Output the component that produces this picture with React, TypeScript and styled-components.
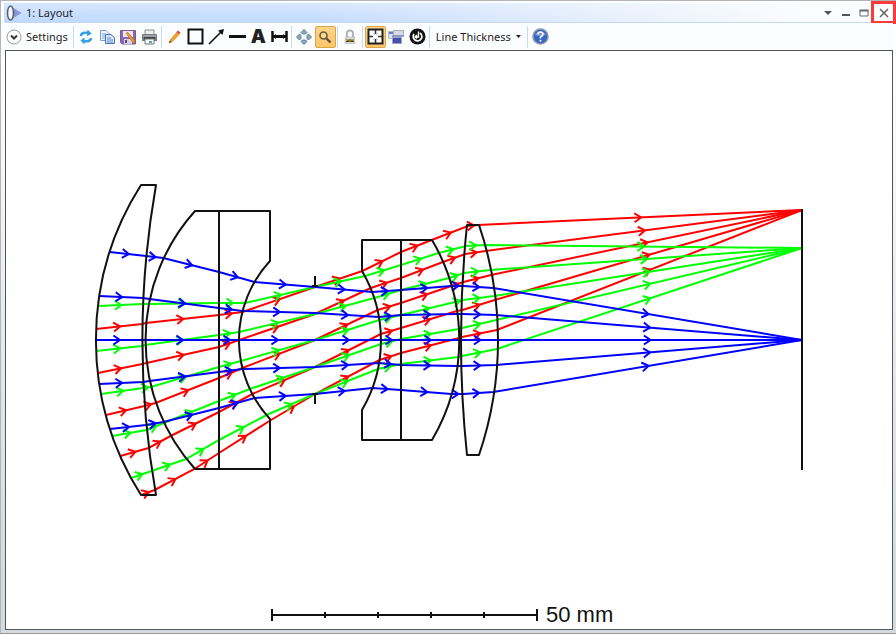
import React from "react";
import styled, { createGlobalStyle } from "styled-components";

const GlobalStyle = createGlobalStyle`
  * { box-sizing: border-box; }
  body { margin: 0; background: #fff; }
`;

const Window = styled.main`
  display: flex;
  flex-direction: column;
  height: 100vh;
  padding: 2px 3px 3px 4px;
  background: linear-gradient(#fdfeff 10%, #d5dade 90%);
  border-top: 1px solid #b4b4b8;
  border-left: 1px solid #b4b4b8;
  border-bottom: 1px solid #96999c;
  font-family: "Noto Sans", "Open Sans", sans-serif;
  font-size: 11px;
  color: #1e1e1e;
`;

const TitleBar = styled.header`
  display: flex;
  align-items: center;
  gap: 4px;
  height: 20px;
  margin: 0 -3px 0 -1px;
  padding-left: 2px;
  background: linear-gradient(to bottom, rgba(255, 255, 255, 0.35), rgba(255, 255, 255, 0)),
    linear-gradient(to right, #bfd9ff, #c3dbfd 35%, #e2edfc 65%, #fafcff 90%);
  border-bottom: 1px solid #c6d9ec;
`;

const Title = styled.h1`
  flex: 1;
  margin: 0;
  font-size: 11px;
  font-weight: 400;
  line-height: 18px;
`;

const WindowButtons = styled.div`
  display: flex;
  align-items: center;
`;

const WindowButton = styled.button<{ $marked?: boolean }>`
  display: grid;
  place-items: center;
  width: ${(p) => (p.$marked ? 25 : 18)}px;
  height: ${(p) => (p.$marked ? 23 : 18)}px;
  margin-left: ${(p) => (p.$marked ? "-2px" : "0")};
  padding: 0;
  background: ${(p) => (p.$marked ? "#fff" : "none")};
  border: ${(p) => (p.$marked ? "3px solid #fb3b3b" : "0")};
`;

const Toolbar = styled.div`
  display: flex;
  align-items: center;
  height: 27px;
  background: #fcfdff;
`;

const ToolButton = styled.button<{ $active?: boolean }>`
  display: flex;
  align-items: center;
  justify-content: center;
  width: 21px;
  height: 22px;
  padding: 0;
  background: ${(p) => (p.$active ? "linear-gradient(#fbd48c, #fdc566)" : "none")};
  border: ${(p) => (p.$active ? "1px solid #d9a648" : "0")};
  border-radius: 2px;
`;

const TextButton = styled.button`
  display: flex;
  align-items: center;
  gap: 4px;
  height: 22px;
  padding: 0 4px 0 1px;
  background: none;
  border: 0;
  color: inherit;
  font-family: inherit;
  font-size: 11px;
  white-space: nowrap;
`;

const MenuButton = styled(TextButton)`
  padding: 0 4px;
`;

const Separator = styled.span`
  width: 1px;
  height: 22px;
  margin: 0 2px 0 1px;
  background: #c9dcee;
`;

const Canvas = styled.section`
  flex: 1;
  min-height: 0;
  border: 1px solid #555;
  background: #fff;
`;

const Drawing = styled.svg`
  display: block;
  width: 100%;
  height: 100%;
`;

const ScaleLabel = styled.text`
  font-family: "Liberation Sans", Arial, sans-serif;
  font-size: 22px;
  fill: #111;
`;

const AXIS = 340;

type Surface = { x: number; radius: number };

// Positive radius: the centre of curvature lies to the right of the vertex.
const surfaces: Surface[] = [
  { x: 96, radius: 289 },
  { x: 142, radius: 896 },
  { x: 145, radius: 193 },
  { x: 219, radius: 0 },
  { x: 239, radius: 116 },
  { x: 315, radius: 0 },
  { x: 381, radius: -137 },
  { x: 401, radius: 0 },
  { x: 459, radius: -197 },
  { x: 462, radius: 1105 },
  { x: 497, radius: -357 },
  { x: 802, radius: 0 },
];

const RED = "#ff0000";
const GREEN = "#00ff00";
const BLUE = "#0000ff";

// Height of each ray at every surface, in drawing coordinates.
const rays: { color: string; y: number[] }[] = [
  { color: RED, y: [329, 324, 323, 315, 312, 287, 271, 252, 240, 226, 225, 210] },
  { color: RED, y: [373, 364, 363, 347, 340, 314, 288, 278, 262, 254, 251, 210] },
  { color: RED, y: [415, 406, 403, 378, 368, 340, 310, 303, 286, 282, 275, 210] },
  { color: RED, y: [456, 448, 436, 412, 394, 367, 334, 328, 311, 310, 300, 210] },
  { color: RED, y: [495, 490, 469, 453, 420, 394, 360, 353, 338, 337, 330, 210] },
  { color: GREEN, y: [306, 304, 304, 303, 303, 287, 276, 265, 253, 246, 245, 248] },
  { color: GREEN, y: [351, 346, 345, 335, 332, 314, 298, 290, 278, 273, 270, 248] },
  { color: GREEN, y: [394, 388, 387, 367, 361, 340, 320, 315, 302, 300, 296, 248] },
  { color: GREEN, y: [436, 430, 423, 401, 389, 367, 344, 339, 329, 328, 320, 248] },
  { color: GREEN, y: [478, 471, 459, 440, 415, 394, 369, 364, 357, 356, 349, 248] },
  { color: BLUE, y: [252, 256, 258, 272, 282, 287, 292, 290, 286, 286, 288, 340] },
  { color: BLUE, y: [296, 298, 299, 308, 311, 313, 317, 315, 314, 314, 315, 340] },
  { color: BLUE, y: [340, 340, 340, 340, 340, 340, 340, 340, 340, 340, 340, 340] },
  { color: BLUE, y: [384, 382, 381, 372, 369, 367, 363, 365, 366, 366, 365, 340] },
  { color: BLUE, y: [429, 425, 422, 408, 398, 394, 388, 390, 394, 394, 392, 340] },
];

function surfaceX({ x, radius }: Surface, y: number) {
  if (radius === 0) return x;
  const h = y - AXIS;
  const sag = Math.abs(radius) - Math.sqrt(radius * radius - h * h);
  return x + Math.sign(radius) * sag;
}

function Ray({ color, y }: { color: string; y: number[] }) {
  const points = y.map((v, i) => [surfaceX(surfaces[i], v), v]);
  const arrows: string[] = [];
  for (let i = 1; i < points.length; i++) {
    const [x0, y0] = points[i - 1];
    const [x1, y1] = points[i];
    if (Math.hypot(x1 - x0, y1 - y0) < 7) continue;
    const angle = Math.atan2(y1 - y0, x1 - x0);
    const mx = (x0 + x1) / 2 + Math.cos(angle);
    const my = (y0 + y1) / 2 + Math.sin(angle);
    const wing = (turn: number) =>
      `${mx - 8 * Math.cos(angle + turn)} ${my - 8 * Math.sin(angle + turn)}`;
    arrows.push(`M${wing(0.6)}L${mx} ${my}L${wing(-0.6)}`);
  }
  return (
    <g fill="none" stroke={color} strokeWidth="2">
      <polyline points={points.map((p) => p.join(",")).join(" ")} />
      <path d={arrows.join("")} />
    </g>
  );
}

function LensDrawing() {
  return (
    <Drawing viewBox="6 51 886 578" role="img" aria-label="Lens layout with ray paths">
      {rays.map((ray, i) => (
        <Ray key={i} color={ray.color} y={ray.y} />
      ))}
      <g fill="none" stroke="#111" strokeWidth="2" strokeLinejoin="round">
        <path d="M141 185H156A896 896 0 0 0 156 495H141A289 289 0 0 1 141 185Z" />
        <path d="M195 211H270V261A116 116 0 0 0 270 419V469H195A193 193 0 0 1 195 211ZM219 211V469" />
        <path d="M362 240H432A197 197 0 0 1 432 440H362V410A137 137 0 0 0 362 271ZM401 240V440" />
        <path d="M467 225H479A357 357 0 0 1 479 455H467A1105 1105 0 0 1 467 225Z" />
        <path d="M315 276V286M312 286H318M315 404V394M312 394H318" />
        <path d="M802 209V470" />
        <path d="M272 615H537M272 609V621M537 609V621M325 612V618M378 612V618M431 612V618M484 612V618" />
      </g>
      <ScaleLabel x="546" y="622">50 mm</ScaleLabel>
    </Drawing>
  );
}

const LensIcon = () => (
  <svg width="16" height="18" viewBox="0 0 16 18" fill="none">
    <path d="M5 3L15 9L5 15M5 9H14" stroke="#8a98dc" />
    <path d="M8 5L14 9L8 13Z" fill="#8793dc" />
    <ellipse cx="4.500" cy="9" rx="3" ry="7" fill="#f4f6fa" stroke="#5b6068" strokeWidth="1.500" />
  </svg>
);
const ChevronIcon = () => (
  <svg width="16" height="16" viewBox="0 0 16 16" fill="none">
    <circle cx="8" cy="8" r="7" fill="#fff" stroke="#9a9a9a" />
    <path d="M5 6.500L8 9.500L11 6.500" stroke="#333" strokeWidth="2" />
  </svg>
);
const RefreshIcon = () => (
  <svg width="14" height="16" viewBox="0 0 14 16" fill="none" stroke="#2f9fe0" strokeWidth="2.400">
    <path d="M2 7C2 4 6 3 9 4" /><path d="M12 9C12 12 8 13 5 12" />
    <path d="M8.500 .5L12.500 4.500L8 7.500ZM5.500 8.500L1.500 11.500L5.500 15.500Z" fill="#2f9fe0" stroke="none" />
  </svg>
);
const CopyIcon = () => (
  <svg width="17" height="16" viewBox="0 0 17 16">
    <path d="M1.500 1.500H7L10 4.500V11.500H1.500Z" fill="#eaf2fd" stroke="#7b9bd1" />
    <path d="M3 5H7M3 7H7M3 9H7" stroke="#7fa5dd" />
    <path d="M6.500 5.500H12L15.500 8.500V14.500H6.500Z" fill="#d9e7fb" stroke="#4a72b8" />
    <path d="M8 9H12M8 11H14M8 13H14" stroke="#5e8cd0" />
  </svg>
);
const SaveIcon = () => (
  <svg width="16" height="16" viewBox="0 0 16 16">
    <path d="M.5 1.500H15.500V15H2L.5 13.500Z" fill="#8a6ab4" stroke="#7858a4" />
    <path d="M3 2H13V8H3Z" fill="#e9e5f4" /><path d="M4 10H12V15H4Z" fill="#d7d3e3" />
    <path d="M5 11H7V14H5Z" fill="#5c4580" />
    <path d="M6 4L8 3.500L15 12L14 14L12.500 13Z" fill="#f49a25" stroke="#b86c17" strokeWidth=".6" />
  </svg>
);
const PrintIcon = () => (
  <svg width="17" height="16" viewBox="0 0 17 16">
    <path d="M4 1H13V6H4Z" fill="#eee" stroke="#909090" />
    <path d="M1 6Q1 5 2 5H15Q16 5 16 6V12H1Z" fill="#777c80" />
    <path d="M2 7H15" stroke="#c0c4c7" /><path d="M3 9H14" stroke="#444" strokeWidth="2" />
    <path d="M4 10H13V15H4Z" fill="#f7f8f8" stroke="#777" /><path d="M8 12H11V14H8Z" fill="#54a9cf" />
  </svg>
);
const PencilIcon = () => (
  <svg width="15" height="16" viewBox="0 0 15 16">
    <path d="M2 14L3.500 10.500L10 3L12.500 5L5.500 12.500Z" fill="#f4a12c" stroke="#d08423" strokeWidth=".6" />
    <path d="M9.500 3L11 1.500L13.500 3.500L12 5Z" fill="#d9464e" />
    <path d="M2 14L3 11.500L4.500 13Z" fill="#444" />
  </svg>
);
const BoxIcon = () => (
  <svg width="17" height="17" viewBox="0 0 17 17"><path d="M1.500 1.500H15.500V15.500H1.500Z" fill="none" stroke="#111" strokeWidth="2" /></svg>
);
const ArrowIcon = () => (
  <svg width="17" height="17" viewBox="0 0 17 17"><path d="M1 16L13 4" stroke="#111" strokeWidth="1.600" /><path d="M16 1L14.500 7L10 2.500Z" fill="#111" /></svg>
);
const LineIcon = () => (
  <svg width="17" height="17" viewBox="0 0 17 17"><path d="M0 8.500H17" stroke="#111" strokeWidth="3" /></svg>
);
const LetterIcon = styled.span`
  font-family: "Inter", "Liberation Sans", sans-serif;
  font-size: 19px;
  font-weight: 900;
  line-height: 20px;
  color: #222;
`;
const DimensionIcon = () => (
  <svg width="17" height="17" viewBox="0 0 17 17"><path d="M1.500 3V14M15.500 3V14" stroke="#111" strokeWidth="2.500" /><path d="M2 8.500H15" stroke="#111" strokeWidth="3" /><path d="M2 8.500L5 6V11ZM15 8.500L12 6V11Z" fill="#111" /></svg>
);
const PanIcon = () => (
  <svg width="16" height="16" viewBox="0 0 16 16" fill="#8aa9c2" stroke="#4c6b84" strokeWidth=".8">
    <path d="M8 .5L11 3.500L9.500 5H6.500L5 3.500ZM8 15.500L11 12.500L9.500 11H6.500L5 12.500ZM.5 8L3.500 5L5 6.500V9.500L3.500 11ZM15.500 8L12.500 5L11 6.500V9.500L12.500 11Z" />
  </svg>
);
const ZoomIcon = () => (
  <svg width="16" height="16" viewBox="0 0 16 16" fill="none">
    <circle cx="6.500" cy="6.500" r="3.500" fill="#f9d797" stroke="#6b5837" strokeWidth="1.600" />
    <path d="M9 9L13.500 13.500" stroke="#5d5040" strokeWidth="2.400" />
  </svg>
);
const LockIcon = () => (
  <svg width="14" height="16" viewBox="0 0 14 16">
    <path d="M4 9V4Q4 1.500 7 1.500Q10 1.500 10 4V9" fill="none" stroke="#b4b4b4" strokeWidth="2" />
    <path d="M2.500 8H11.500V14.500H2.500Z" fill="#ddd" stroke="#aaa" strokeWidth=".6" />
    <path d="M3 10.500H11V13H3Z" fill="#3a3520" /><path d="M3 12L5 10.500L7 12.500L9 10.500L11 12" fill="none" stroke="#e5c93a" />
  </svg>
);
const FitIcon = () => (
  <svg width="17" height="17" viewBox="0 0 17 17">
    <path d="M1.500 1.500H15.500V15.500H1.500Z" fill="#fff" stroke="#222" strokeWidth="2" />
    <path d="M8.500 2V6M8.500 11V15M2 8.500H6M11 8.500H15" stroke="#333" strokeWidth="1.600" />
    <path d="M6.500 5.500L7.500 6.500M10.500 5.500L9.500 6.500M6.500 11.500L7.500 10.500M10.500 11.500L9.500 10.500" stroke="#999" />
  </svg>
);
const WindowsIcon = () => (
  <svg width="17" height="16" viewBox="0 0 17 16">
    <path d="M.5 2.500H11.500V9.500H.5Z" fill="#e3e5ea" stroke="#b5b8c0" /><path d="M1 3H11V5H1Z" fill="#6f7fbd" />
    <path d="M5.500 1.500H15.500V6.500H5.500Z" fill="#d8dbe3" stroke="#a6abb8" /><path d="M4 6H16V8H4Z" fill="#8f9ac9" />
    <path d="M4.500 8.500H13.500V14.500H4.500Z" fill="#4450ad" stroke="#9ca3c5" />
  </svg>
);
const ResetIcon = () => (
  <svg width="17" height="17" viewBox="0 0 17 17" fill="none">
    <circle cx="8.500" cy="8.500" r="8" fill="#111" />
    <path d="M5 6A4.300 4.300 0 1 0 11 5" stroke="#fff" strokeWidth="1.800" /><path d="M9.500 3.500V9H6.500M8 7L6 9L8 10.500" stroke="#fff" strokeWidth="1.400" />
  </svg>
);
const HelpIcon = () => (
  <svg width="17" height="17" viewBox="0 0 17 17" fill="none">
    <circle cx="8.500" cy="8.500" r="7.500" fill="#3866bf" stroke="#8c98aa" strokeWidth="1.600" />
    <path d="M3 7A6 6 0 0 1 14 7Q8 9 3 7Z" fill="#7398dc" />
    <path d="M6 6.500Q6 4 8.500 4Q11 4 11 6.200Q11 7.500 8.500 9V10.500" stroke="#fff" strokeWidth="1.600" /><circle cx="8.500" cy="12.800" r="1" fill="#fff" />
  </svg>
);
const CaretIcon = () => (
  <svg width="7" height="5" viewBox="0 0 7 5"><path d="M1 1H6L3.500 4Z" fill="#222" /></svg>
);

const tools = {
  file: [["Refresh", RefreshIcon], ["Copy", CopyIcon], ["Save", SaveIcon], ["Print", PrintIcon]],
  draw: [["Pencil", PencilIcon], ["Rectangle", BoxIcon], ["Arrow", ArrowIcon], ["Line", LineIcon]],
} as const;

export default function App() {
  return (
    <>
      <GlobalStyle />
      <Window>
        <TitleBar>
          <LensIcon />
          <Title>1: Layout</Title>
          <WindowButtons>
            <WindowButton aria-label="Menu">
              <svg width="10" height="6"><path d="M1 1H9L5 5Z" fill="#555" /></svg>
            </WindowButton>
            <WindowButton aria-label="Minimize">
              <svg width="10" height="10"><path d="M1 7H9" stroke="#555" strokeWidth="2" /></svg>
            </WindowButton>
            <WindowButton aria-label="Maximize">
              <svg width="10" height="8"><path d="M1 1.500H9V7H1Z" fill="none" stroke="#666" /><path d="M.5 1.500H9.500" stroke="#666" strokeWidth="2" /></svg>
            </WindowButton>
            <WindowButton aria-label="Close" $marked>
              <svg width="10" height="10"><path d="M1 1L9 9M9 1L1 9" stroke="#666" strokeWidth="1.600" /></svg>
            </WindowButton>
          </WindowButtons>
        </TitleBar>
        <Toolbar role="toolbar" aria-label="Layout tools">
          <TextButton><ChevronIcon />Settings</TextButton>
          <Separator />
          {tools.file.map(([name, Icon]) => (
            <ToolButton key={name} aria-label={name}><Icon /></ToolButton>
          ))}
          <Separator />
          {tools.draw.map(([name, Icon]) => (
            <ToolButton key={name} aria-label={name}><Icon /></ToolButton>
          ))}
          <ToolButton aria-label="Text"><LetterIcon>A</LetterIcon></ToolButton>
          <ToolButton aria-label="Dimension"><DimensionIcon /></ToolButton>
          <Separator />
          <ToolButton aria-label="Pan"><PanIcon /></ToolButton>
          <ToolButton aria-label="Zoom" $active><ZoomIcon /></ToolButton>
          <Separator />
          <ToolButton aria-label="Lock"><LockIcon /></ToolButton>
          <Separator />
          <ToolButton aria-label="Fit" $active><FitIcon /></ToolButton>
          <ToolButton aria-label="Windows"><WindowsIcon /></ToolButton>
          <ToolButton aria-label="Reset"><ResetIcon /></ToolButton>
          <Separator />
          <MenuButton>Line Thickness<CaretIcon /></MenuButton>
          <Separator />
          <ToolButton aria-label="Help"><HelpIcon /></ToolButton>
        </Toolbar>
        <Canvas>
          <LensDrawing />
        </Canvas>
      </Window>
    </>
  );
}
